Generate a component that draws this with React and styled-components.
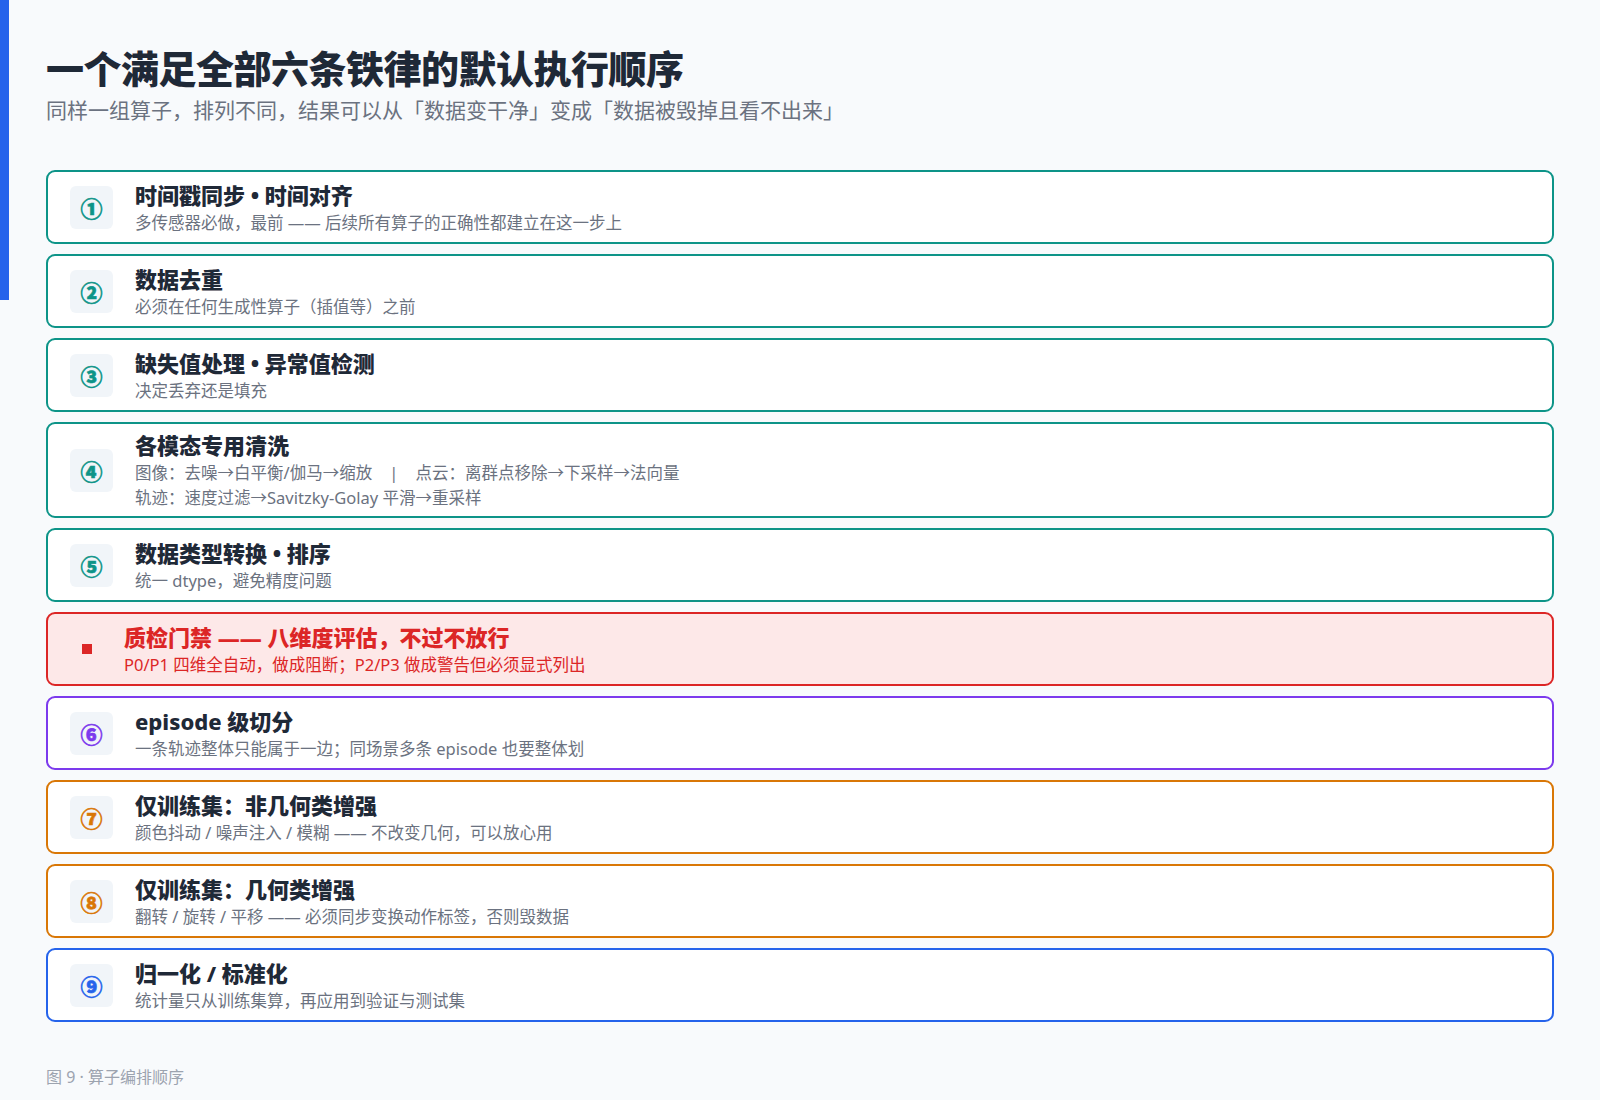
import React from 'react';
import styled, { createGlobalStyle } from 'styled-components';

const Global = createGlobalStyle`
  html, body { margin: 0; padding: 0; background: #f8fafc; }
  body { font-family: "Noto Sans", "Noto Sans CJK SC", sans-serif; color: #1f2937; }
`;

const Page = styled.div`
  position: relative;
  width: 1600px;
  height: 1100px;
  box-sizing: border-box;
  padding: 40px 46px 0 46px;
`;

const Accent = styled.div`
  position: absolute;
  left: 0;
  top: 0;
  width: 9px;
  height: 300px;
  background: #2563eb;
`;

const Title = styled.h1`
  margin: 0;
  font-size: 38px;
  font-weight: 900;
  line-height: 56px;
  color: #1f2937;
  letter-spacing: -0.5px;
`;

const Subtitle = styled.div`
  font-size: 21px;
  color: #6b7280;
  line-height: 28px;
`;

const List = styled.div`
  display: flex;
  flex-direction: column;
  gap: 10px;
  margin-top: 46px;
`;

const Card = styled.div`
  display: flex;
  align-items: center;
  gap: 22px;
  min-height: 74px;
  box-sizing: border-box;
  padding: 6px 22px;
  border: 2px solid ${p => p.$c};
  border-radius: 9px;
  background: ${p => p.$bg || '#fff'};
`;

const Badge = styled.div`
  width: 43px;
  height: 43px;
  flex: none;
  border-radius: 6px;
  background: #f1f5f9;
  display: flex;
  align-items: center;
  justify-content: center;
  color: ${p => p.$c};
  font-size: 22px;
  font-weight: 900;
  -webkit-text-stroke: 0.6px ${p => p.$c};
`;

const Square = styled.div`
  width: 10px;
  height: 10px;
  margin: 0 10px 0 12px;
  background: #dc2626;
  flex: none;
`;

const Body = styled.div`
  display: flex;
  flex-direction: column;
`;

const Name = styled.div`
  font-size: 22px;
  font-weight: 800;
  line-height: 30px;
  color: ${p => p.$c || '#1f2937'};
`;

const Sub = styled.div`
  font-size: 16.5px;
  line-height: 25px;
  color: ${p => p.$c || '#6b7280'};
`;

const Footer = styled.div`
  margin-top: 42px;
  font-size: 16px;
  color: #9ca3af;
`;

const teal = '#0d9488';
const steps = [
  { n: '①', c: teal, t: '时间戳同步 • 时间对齐', s: ['多传感器必做，最前 —— 后续所有算子的正确性都建立在这一步上'] },
  { n: '②', c: teal, t: '数据去重', s: ['必须在任何生成性算子（插值等）之前'] },
  { n: '③', c: teal, t: '缺失值处理 • 异常值检测', s: ['决定丢弃还是填充'] },
  { n: '④', c: teal, t: '各模态专用清洗', s: ['图像：去噪→白平衡/伽马→缩放\u00a0\u00a0\u00a0\u00a0|\u00a0\u00a0\u00a0\u00a0点云：离群点移除→下采样→法向量', '轨迹：速度过滤→Savitzky-Golay 平滑→重采样'] },
  { n: '⑤', c: teal, t: '数据类型转换 • 排序', s: ['统一 dtype，避免精度问题'] },
  { gate: true },
  { n: '⑥', c: '#7c3aed', t: 'episode 级切分', s: ['一条轨迹整体只能属于一边；同场景多条 episode 也要整体划'] },
  { n: '⑦', c: '#d97706', t: '仅训练集：非几何类增强', s: ['颜色抖动 / 噪声注入 / 模糊 —— 不改变几何，可以放心用'] },
  { n: '⑧', c: '#d97706', t: '仅训练集：几何类增强', s: ['翻转 / 旋转 / 平移 —— 必须同步变换动作标签，否则毁数据'] },
  { n: '⑨', c: '#2563eb', t: '归一化 / 标准化', s: ['统计量只从训练集算，再应用到验证与测试集'] },
];

export default function App() {
  return (
    <Page>
      <Global />
      <Accent />
      <Title>一个满足全部六条铁律的默认执行顺序</Title>
      <Subtitle>同样一组算子，排列不同，结果可以从「数据变干净」变成「数据被毁掉且看不出来」</Subtitle>
      <List>
        {steps.map((st, i) =>
          st.gate ? (
            <Card key={i} $c="#dc2626" $bg="#fde8e8">
              <Square />
              <Body>
                <Name $c="#dc2626">质检门禁 —— 八维度评估，不过不放行</Name>
                <Sub $c="#dc2626">P0/P1 四维全自动，做成阻断；P2/P3 做成警告但必须显式列出</Sub>
              </Body>
            </Card>
          ) : (
            <Card key={i} $c={st.c}>
              <Badge $c={st.c}>{st.n}</Badge>
              <Body>
                <Name>{st.t}</Name>
                {st.s.map((x, j) => <Sub key={j}>{x}</Sub>)}
              </Body>
            </Card>
          )
        )}
      </List>
      <Footer>图 9 · 算子编排顺序</Footer>
    </Page>
  );
}
